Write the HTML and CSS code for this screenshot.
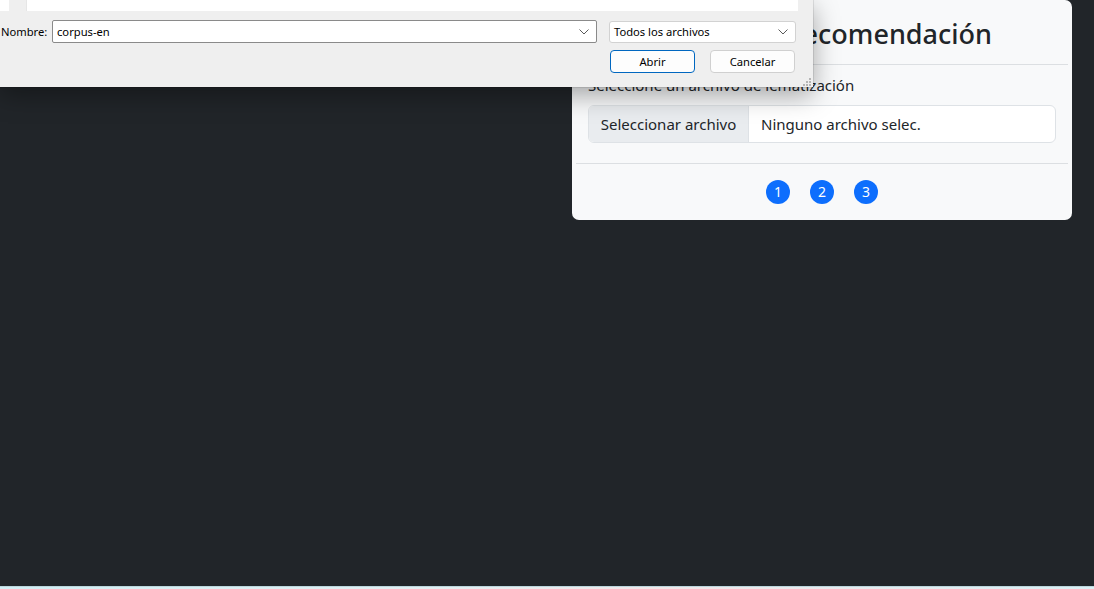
FILE: index.html
```html
<!DOCTYPE html>
<html lang="es">
<head>
<meta charset="utf-8">
<title>Sistema de Recomendación</title>
<link rel="stylesheet" href="styles.css">
</head>
<body>
<div class="page">
  <main class="main">
    <section class="card">
      <div class="card-header">
        <h2 class="card-title">Sistema de Recomendación</h2>
      </div>
      <div class="card-body">
        <label class="form-label">Seleccione un archivo de lematización</label>
        <div class="file-input">
          <span class="file-btn">Seleccionar archivo</span>
          <span class="file-name">Ninguno archivo selec.</span>
        </div>
      </div>
      <div class="card-footer">
        <span class="step">1</span>
        <span class="step">2</span>
        <span class="step">3</span>
      </div>
    </section>
  </main>
  <div class="taskbar-edge"></div>

  <div class="dialog">
    <div class="dlg-top">
      <div class="nav-pane"></div>
      <div class="splitter"></div>
      <div class="file-list"></div>
    </div>
    <div class="dlg-row">
      <span class="dlg-label">Nombre:</span>
      <div class="dlg-input">
        <span>corpus-en</span>
        <svg class="chev" width="10" height="6" viewBox="0 0 10 6"><path d="M0.5 0.5 L5 5 L9.5 0.5" fill="none" stroke="#5a5a5a" stroke-width="1"/></svg>
      </div>
      <div class="dlg-select">
        <span>Todos los archivos</span>
        <svg class="chev" width="10" height="6" viewBox="0 0 10 6"><path d="M0.5 0.5 L5 5 L9.5 0.5" fill="none" stroke="#5a5a5a" stroke-width="1"/></svg>
      </div>
    </div>
    <div class="dlg-buttons">
      <button class="dlg-btn primary">Abrir</button>
      <button class="dlg-btn">Cancelar</button>
    </div>
    <svg class="grip" width="8" height="8" viewBox="0 0 8 8">
      <rect x="6" y="0" width="2" height="2" fill="#b5b5b5"/>
      <rect x="3" y="3" width="2" height="2" fill="#b5b5b5"/>
      <rect x="6" y="3" width="2" height="2" fill="#b5b5b5"/>
      <rect x="0" y="6" width="2" height="2" fill="#b5b5b5"/>
      <rect x="3" y="6" width="2" height="2" fill="#b5b5b5"/>
      <rect x="6" y="6" width="2" height="2" fill="#b5b5b5"/>
    </svg>
  </div>
</div>
</body>
</html>
```

FILE: styles.css
```css
* { box-sizing: border-box; }
html, body { margin: 0; padding: 0; }
body {
  background: #212529;
  font-family: "Noto Sans", "Open Sans", sans-serif;
  color: #212529;
  overflow: hidden;
}
.page {
  position: relative;
  height: 589px;
  display: flex;
  flex-direction: column;
}
.main {
  flex: 1;
  display: flex;
  justify-content: flex-end;
  align-items: flex-start;
  padding-right: 22px;
}
.card {
  width: 500px;
  background: #f8f9fa;
  border-radius: 7px;
  border-top-left-radius: 0;
}
.card-header {
  padding: 15px 76px 11px 16px;
  margin: 0 4px;
  border-bottom: 1px solid #dcdfe2;
  text-align: right;
}
.card-title {
  margin: 0;
  font-size: 27px;
  font-weight: 500;
  line-height: 38px;
  color: #212529;
  white-space: nowrap;
}
.card-body {
  padding: 8px 16px 20px;
  margin: 0 4px;
  border-bottom: 1px solid #dcdfe2;
}
.card-body .form-label { margin-left: -4px; }
.file-input { margin-left: -4px; margin-right: -4px; }
.form-label {
  display: block;
  font-size: 15px;
  line-height: 24px;
  margin-bottom: 8px;
  color: #212529;
}
.file-input {
  display: flex;
  height: 38px;
  border: 1px solid #dee2e6;
  border-radius: 6px;
  background: #fff;
  overflow: hidden;
  font-size: 15px;
}
.file-btn {
  width: 160px;
  background: #e9ecef;
  border-right: 1px solid #dee2e6;
  display: flex;
  align-items: center;
  justify-content: center;
  color: #212529;
}
.file-name {
  display: flex;
  align-items: center;
  padding-left: 12px;
  color: #212529;
}
.card-footer {
  display: flex;
  justify-content: center;
  gap: 20px;
  padding: 16px 0 16px;
}
.step {
  width: 24px;
  height: 24px;
  border-radius: 50%;
  background: #0d6efd;
  color: #fff;
  font-size: 14px;
  display: flex;
  align-items: center;
  justify-content: center;
  line-height: 1;
}
.taskbar-edge {
  height: 3px;
  background: linear-gradient(90deg, #d3eef4, #e4eef1 40%, #f2e6e8 60%, #dbeff4);
  border-top: 1px solid #bcd6dc;
}

/* Windows file dialog */
.dialog {
  position: absolute;
  left: 0;
  top: 0;
  width: 813px;
  height: 87px;
  background: #efefef;
  box-shadow: 0 8px 24px rgba(0,0,0,0.35), 0 0 1px rgba(0,0,0,0.5);
  font-family: "Noto Sans", "Open Sans", sans-serif;
  font-size: 11.2px;
  color: #000;
  padding-right: 17px;
}
.dlg-top {
  display: flex;
  height: 11px;
}
.nav-pane { width: 9px; background: #fff; }
.splitter { width: 17px; background: #efefef; }
.file-list { flex: 1; background: #fff; margin-right: -2px; border-left: 1px solid #e6e6e6; }
.dlg-row {
  display: flex;
  align-items: center;
  margin-top: 9px;
  height: 23px;
}
.dlg-label {
  width: 52px;
  padding-left: 1px;
}
.dlg-input {
  width: 545px;
  height: 23px;
  background: #fff;
  border: 1px solid #8a8a8a;
  border-radius: 2px;
  display: flex;
  align-items: center;
  justify-content: space-between;
  padding: 0 7px 0 4px;
}
.dlg-select {
  margin-left: 12px;
  width: 187px;
  height: 22px;
  background: #fff;
  border: 1px solid #d2d2d2;
  border-radius: 3px;
  display: flex;
  align-items: center;
  justify-content: space-between;
  padding: 0 7px 0 4px;
}
.chev { display: block; }
.dlg-buttons {
  display: flex;
  justify-content: flex-end;
  gap: 15px;
  margin-top: 7px;
  padding-right: 1px;
}
.dlg-btn {
  width: 85px;
  height: 23px;
  background: #fdfdfd;
  border: 1px solid #d0d0d0;
  border-radius: 4px;
  font-family: inherit;
  font-size: 11.2px;
  color: #000;
  padding: 0;
}
.dlg-btn.primary {
  border-color: #0067c0;
}
.grip {
  position: absolute;
  right: 2px;
  bottom: 1px;
}
```
